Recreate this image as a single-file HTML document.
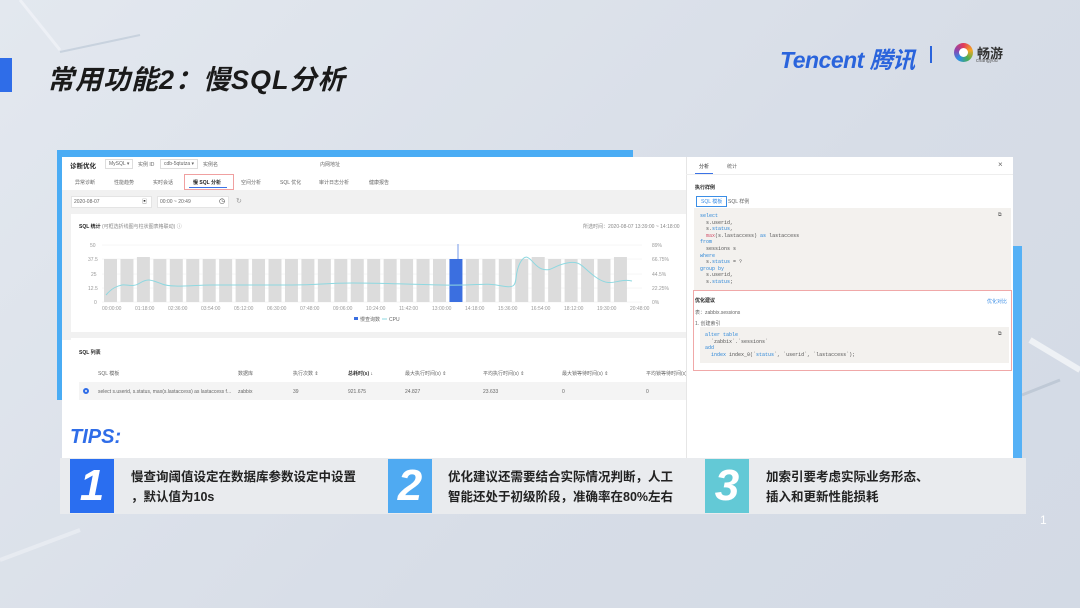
<!DOCTYPE html>
<html><head><meta charset="utf-8"><style>
*{margin:0;padding:0;box-sizing:border-box}
body{width:1080px;height:608px;overflow:hidden;background:linear-gradient(135deg,#e3e8ef 0%,#d7dde7 60%,#d3dae5 100%);font-family:"Liberation Sans","Noto Sans CJK SC",sans-serif;position:relative;color:#333}
.abs{position:absolute}
.t{font-size:5px;color:#666;white-space:nowrap}
.code{font-family:"Liberation Mono",monospace;font-size:5px;line-height:6.6px;color:#555;white-space:pre}
.k{color:#2d87d8}.r{color:#d1506a}
</style></head><body>
<!-- decorative lines -->
<svg class="abs" style="left:0;top:0" width="1080" height="608"><path d="M20 0 L60 50" stroke="#f3f5f9" stroke-width="3" opacity=".7"/><path d="M60 52 L140 35" stroke="#c8d2de" stroke-width="2"/><path d="M1030 340 L1080 370" stroke="#eef1f5" stroke-width="6"/><path d="M1022 395 L1060 380" stroke="#bfc9d6" stroke-width="3"/><path d="M0 560 L80 530" stroke="#edf0f4" stroke-width="4" opacity=".7"/></svg>
<div class="abs" style="left:0;top:58px;width:12px;height:34px;background:#2f6de8"></div>
<div class="abs" style="left:47px;top:58px;font-size:27px;font-weight:bold;font-style:italic;color:#1a1a1a;letter-spacing:1px">常用功能2：慢SQL分析</div>
<div class="abs" style="left:780px;top:41px;font-size:23px;font-weight:bold;color:#2a64dc;letter-spacing:-0.5px;font-style:italic">Tencent 腾讯</div>
<div class="abs" style="left:930px;top:46px;width:2px;height:17px;background:#2a64dc"></div>
<div class="abs" style="left:954px;top:43px;width:19px;height:19px;border-radius:50%;background:conic-gradient(#e23a5a,#f5a623,#4caf50,#2a8fe8,#8e44ad,#e23a5a)"></div>
<div class="abs" style="left:959px;top:48px;width:9px;height:9px;border-radius:50%;background:#fff"></div>
<div class="abs" style="left:977px;top:43px;font-size:13px;font-weight:bold;color:#333">畅游</div>
<div class="abs" style="left:976px;top:58px;font-size:5px;color:#555">changyou</div>

<!-- blue frame -->
<div class="abs" style="left:57px;top:150px;width:576px;height:12px;background:#4aacf4"></div>
<div class="abs" style="left:57px;top:150px;width:6px;height:250px;background:#4aacf4"></div>
<div class="abs" style="left:1012px;top:246px;width:10px;height:212px;background:#55b1f6"></div>

<!-- left panel -->
<div class="abs" style="left:62px;top:157px;width:624px;height:301px;background:#fff"></div>
<div class="abs" style="left:62px;top:190px;width:624px;height:150px;background:#f1f1f1"></div>
<div class="abs" style="left:70px;top:160px;font-size:6.5px;font-weight:bold;color:#222">诊断优化</div>
<div class="abs t" style="left:105px;top:159px;border:1px solid #ddd;padding:1px 3px">MySQL ▾</div>
<div class="abs t" style="left:138px;top:161px">实例 ID</div>
<div class="abs t" style="left:160px;top:159px;border:1px solid #ddd;padding:1px 3px">cdb-5qtutza ▾</div>
<div class="abs t" style="left:203px;top:161px">实例名</div>
<div class="abs t" style="left:320px;top:161px">内网地址</div>
<div class="abs t" style="left:75px;top:179px">异常诊断</div>
<div class="abs t" style="left:114px;top:179px">性能趋势</div>
<div class="abs t" style="left:153px;top:179px">实时会话</div>
<div class="abs" style="left:184px;top:174px;width:50px;height:16px;border:1px solid #f0a0a0"></div>
<div class="abs t" style="left:193px;top:179px;color:#222;font-weight:bold">慢 SQL 分析</div>
<div class="abs" style="left:189px;top:187px;width:38px;height:1px;background:#3b73e6"></div>
<div class="abs t" style="left:241px;top:179px">空间分析</div>
<div class="abs t" style="left:280px;top:179px">SQL 优化</div>
<div class="abs t" style="left:319px;top:179px">审计日志分析</div>
<div class="abs t" style="left:369px;top:179px">健康报告</div>
<div class="abs" style="left:71px;top:196px;width:81px;height:12px;background:#fff;border:1px solid #e4e4e4"></div>
<div class="abs t" style="left:74px;top:199px">2020-08-07</div>
<div class="abs t" style="left:142px;top:198px;color:#333">▣</div>
<div class="abs" style="left:157px;top:196px;width:72px;height:12px;background:#fff;border:1px solid #e4e4e4"></div>
<div class="abs t" style="left:160px;top:199px">00:00 ~ 20:49</div>
<div class="abs t" style="left:219px;top:197px;color:#333;font-size:7px">◷</div>
<div class="abs t" style="left:236px;top:197px;font-size:7px;color:#999">↻</div>
<div class="abs" style="left:71px;top:214px;width:615px;height:118px;background:#fff"></div>
<div class="abs t" style="left:79px;top:223px;color:#222;font-weight:bold">SQL 统计 <span style="font-weight:normal;color:#888">(可框选折线图与柱状图表格联动) ⓘ</span></div>
<div class="abs t" style="left:583px;top:223px;color:#888">所选时间：2020-08-07 13:39:00 ~ 14:18:00</div>
<svg class="abs" style="left:62px;top:238px" width="624" height="90" font-family="Liberation Sans" font-size="5" fill="#999">
<g stroke="#eee" stroke-width=".5"><line x1="40" y1="7" x2="580" y2="7"/><line x1="40" y1="21" x2="580" y2="21"/><line x1="40" y1="36" x2="580" y2="36"/><line x1="40" y1="50" x2="580" y2="50"/><line x1="40" y1="64" x2="580" y2="64"/></g>
<text x="28" y="9">50</text><text x="26" y="23">37.5</text><text x="29" y="38">25</text><text x="26" y="52">12.5</text><text x="32" y="66">0</text>
<text x="590" y="9">89%</text><text x="590" y="23">66.75%</text><text x="590" y="38">44.5%</text><text x="590" y="52">22.25%</text><text x="590" y="66">0%</text>
<g fill="#dcdcdc" id="bars"></g>
<line x1="396" y1="6" x2="396" y2="22" stroke="#3b6fe0" stroke-width=".7"/>
<path d="M44 57 C50 50,55 48,60 47 S70 50,78 45 S90 42,100 46 S130 47,150 47 S200 47,230 47 S260 45,290 45 S340 46,380 47 S420 44,440 48 S450 40,458 25 S470 28,480 31 S490 28,505 25 S520 30,535 40 S555 40,570 43" fill="none" stroke="#8ed8e0" stroke-width="1"/>
<text x="40" y="72">00:00:00</text><text x="73" y="72">01:18:00</text><text x="106" y="72">02:36:00</text><text x="139" y="72">03:54:00</text><text x="172" y="72">05:12:00</text><text x="205" y="72">06:30:00</text><text x="238" y="72">07:48:00</text><text x="271" y="72">09:06:00</text><text x="304" y="72">10:24:00</text><text x="337" y="72">11:42:00</text><text x="370" y="72">13:00:00</text><text x="403" y="72">14:18:00</text><text x="436" y="72">15:36:00</text><text x="469" y="72">16:54:00</text><text x="502" y="72">18:12:00</text><text x="535" y="72">19:30:00</text><text x="568" y="72">20:48:00</text>
<rect x="292" y="79" width="4" height="3" fill="#3b6fe0"/><text x="298" y="83" fill="#666">慢查询数</text><line x1="320" y1="81" x2="325" y2="81" stroke="#8ed8e0"/><text x="327" y="83" fill="#666">CPU</text>
</svg>
<div class="abs" style="left:71px;top:338px;width:615px;height:120px;background:#fff"></div>
<div class="abs t" style="left:79px;top:349px;color:#222;font-weight:bold">SQL 列表</div>
<div class="abs t" style="left:98px;top:370px">SQL 模板</div>
<div class="abs t" style="left:238px;top:370px">数据库</div>
<div class="abs t" style="left:293px;top:370px">执行次数 ⇕</div>
<div class="abs t" style="left:348px;top:370px;color:#333;font-weight:bold">总耗时(s) ↓</div>
<div class="abs t" style="left:405px;top:370px">最大执行时间(s) ⇕</div>
<div class="abs t" style="left:483px;top:370px">平均执行时间(s) ⇕</div>
<div class="abs t" style="left:562px;top:370px">最大锁等待时间(s) ⇕</div>
<div class="abs t" style="left:646px;top:370px">平均锁等待时间(s)</div>
<div class="abs" style="left:79px;top:382px;width:607px;height:18px;background:#f4f4f4"></div>
<div class="abs" style="left:83px;top:388px;width:6px;height:6px;border-radius:50%;border:2px solid #2f6de8"></div>
<div class="abs t" style="left:98px;top:389px">select s.userid, s.status, max(s.lastaccess) as lastaccess f...</div>
<div class="abs t" style="left:238px;top:389px">zabbix</div>
<div class="abs t" style="left:293px;top:389px">39</div>
<div class="abs t" style="left:348px;top:389px">921.675</div>
<div class="abs t" style="left:405px;top:389px">24.827</div>
<div class="abs t" style="left:483px;top:389px">23.633</div>
<div class="abs t" style="left:562px;top:389px">0</div>
<div class="abs t" style="left:646px;top:389px">0</div>

<!-- right panel -->
<div class="abs" style="left:686px;top:157px;width:327px;height:301px;background:#fff;border-left:1px solid #e6e6e6"></div>
<div class="abs" style="left:686px;top:174px;width:327px;height:1px;background:#eee"></div>
<div class="abs t" style="left:699px;top:163px;color:#222">分析</div>
<div class="abs" style="left:695px;top:173px;width:18px;height:1px;background:#3b73e6"></div>
<div class="abs t" style="left:727px;top:163px">统计</div>
<div class="abs t" style="left:998px;top:160px;font-size:8px;color:#666">×</div>
<div class="abs t" style="left:695px;top:184px;color:#222;font-weight:bold">执行样例</div>
<div class="abs t" style="left:696px;top:196px;border:1px solid #3b8ee6;color:#3b8ee6;padding:1px 4px">SQL 模板</div>
<div class="abs t" style="left:728px;top:198px">SQL 样例</div>
<div class="abs" style="left:694px;top:208px;width:317px;height:82px;background:#f3f1ee"></div>
<div class="abs t" style="left:998px;top:212px">⧉</div>
<div class="abs code" style="left:700px;top:213px"><span class="k">select</span>
  s.userid,
  s.<span class="k">status</span>,
  <span class="r">max</span>(s.lastaccess) <span class="k">as</span> lastaccess
<span class="k">from</span>
  sessions s
<span class="k">where</span>
  s.<span class="k">status</span> = ?
<span class="k">group by</span>
  s.userid,
  s.<span class="k">status</span>;</div>
<div class="abs" style="left:693px;top:290px;width:319px;height:81px;border:1px solid #f0a8a8;background:#fff"></div>
<div class="abs t" style="left:695px;top:297px;color:#222;font-weight:bold">优化建议</div>
<div class="abs t" style="left:987px;top:298px;color:#3b8ee6">优化对比</div>
<div class="abs t" style="left:695px;top:309px">表：zabbix.sessions</div>
<div class="abs t" style="left:695px;top:320px">1. 创建索引</div>
<div class="abs" style="left:700px;top:327px;width:309px;height:36px;background:#f3f1ee"></div>
<div class="abs t" style="left:998px;top:331px">⧉</div>
<div class="abs code" style="left:705px;top:332px"><span class="k">alter table</span>
  `zabbix`.`sessions`
<span class="k">add</span>
  <span class="k">index</span> index_0(`<span class="k">status</span>`, `userid`, `lastaccess`);</div>

<!-- tips -->
<div class="abs" style="left:70px;top:426px;font-size:20px;font-weight:bold;font-style:italic;color:#2f6de8">TIPS:</div>
<div class="abs" style="left:60px;top:458px;width:966px;height:56px;background:#e9ebee"></div>
<div class="abs" style="left:70px;top:459px;width:44px;height:54px;background:#2a6ef0;color:#fff;font-size:44px;font-style:italic;font-weight:bold;text-align:center;line-height:54px">1</div>
<div class="abs" style="left:131px;top:467px;font-size:12.5px;font-weight:bold;line-height:20px;color:#222">慢查询阈值设定在数据库参数设定中设置<br>，默认值为10s</div>
<div class="abs" style="left:388px;top:459px;width:44px;height:54px;background:#4faaf2;color:#fff;font-size:44px;font-style:italic;font-weight:bold;text-align:center;line-height:54px">2</div>
<div class="abs" style="left:448px;top:467px;font-size:12.5px;font-weight:bold;line-height:20px;color:#222">优化建议还需要结合实际情况判断，人工<br>智能还处于初级阶段，准确率在80%左右</div>
<div class="abs" style="left:705px;top:459px;width:44px;height:54px;background:#63c9d6;color:#fff;font-size:44px;font-style:italic;font-weight:bold;text-align:center;line-height:54px">3</div>
<div class="abs" style="left:766px;top:467px;font-size:12.5px;font-weight:bold;line-height:20px;color:#222">加索引要考虑实际业务形态、<br>插入和更新性能损耗</div>
<div class="abs" style="left:1040px;top:513px;font-size:12px;color:#fff">1</div>
<script>
var g=document.getElementById('bars'),s='';
for(var i=0;i<32;i++){var x=42+i*16.45,h=(i==2||i==26||i==31)?45:43;
s+='<rect x="'+x+'" y="'+(64-h)+'" width="13" height="'+h+'"'+(i==21?' fill="#3b6fe0"':'')+'/>';}
g.innerHTML=s;
</script>
</body></html>
